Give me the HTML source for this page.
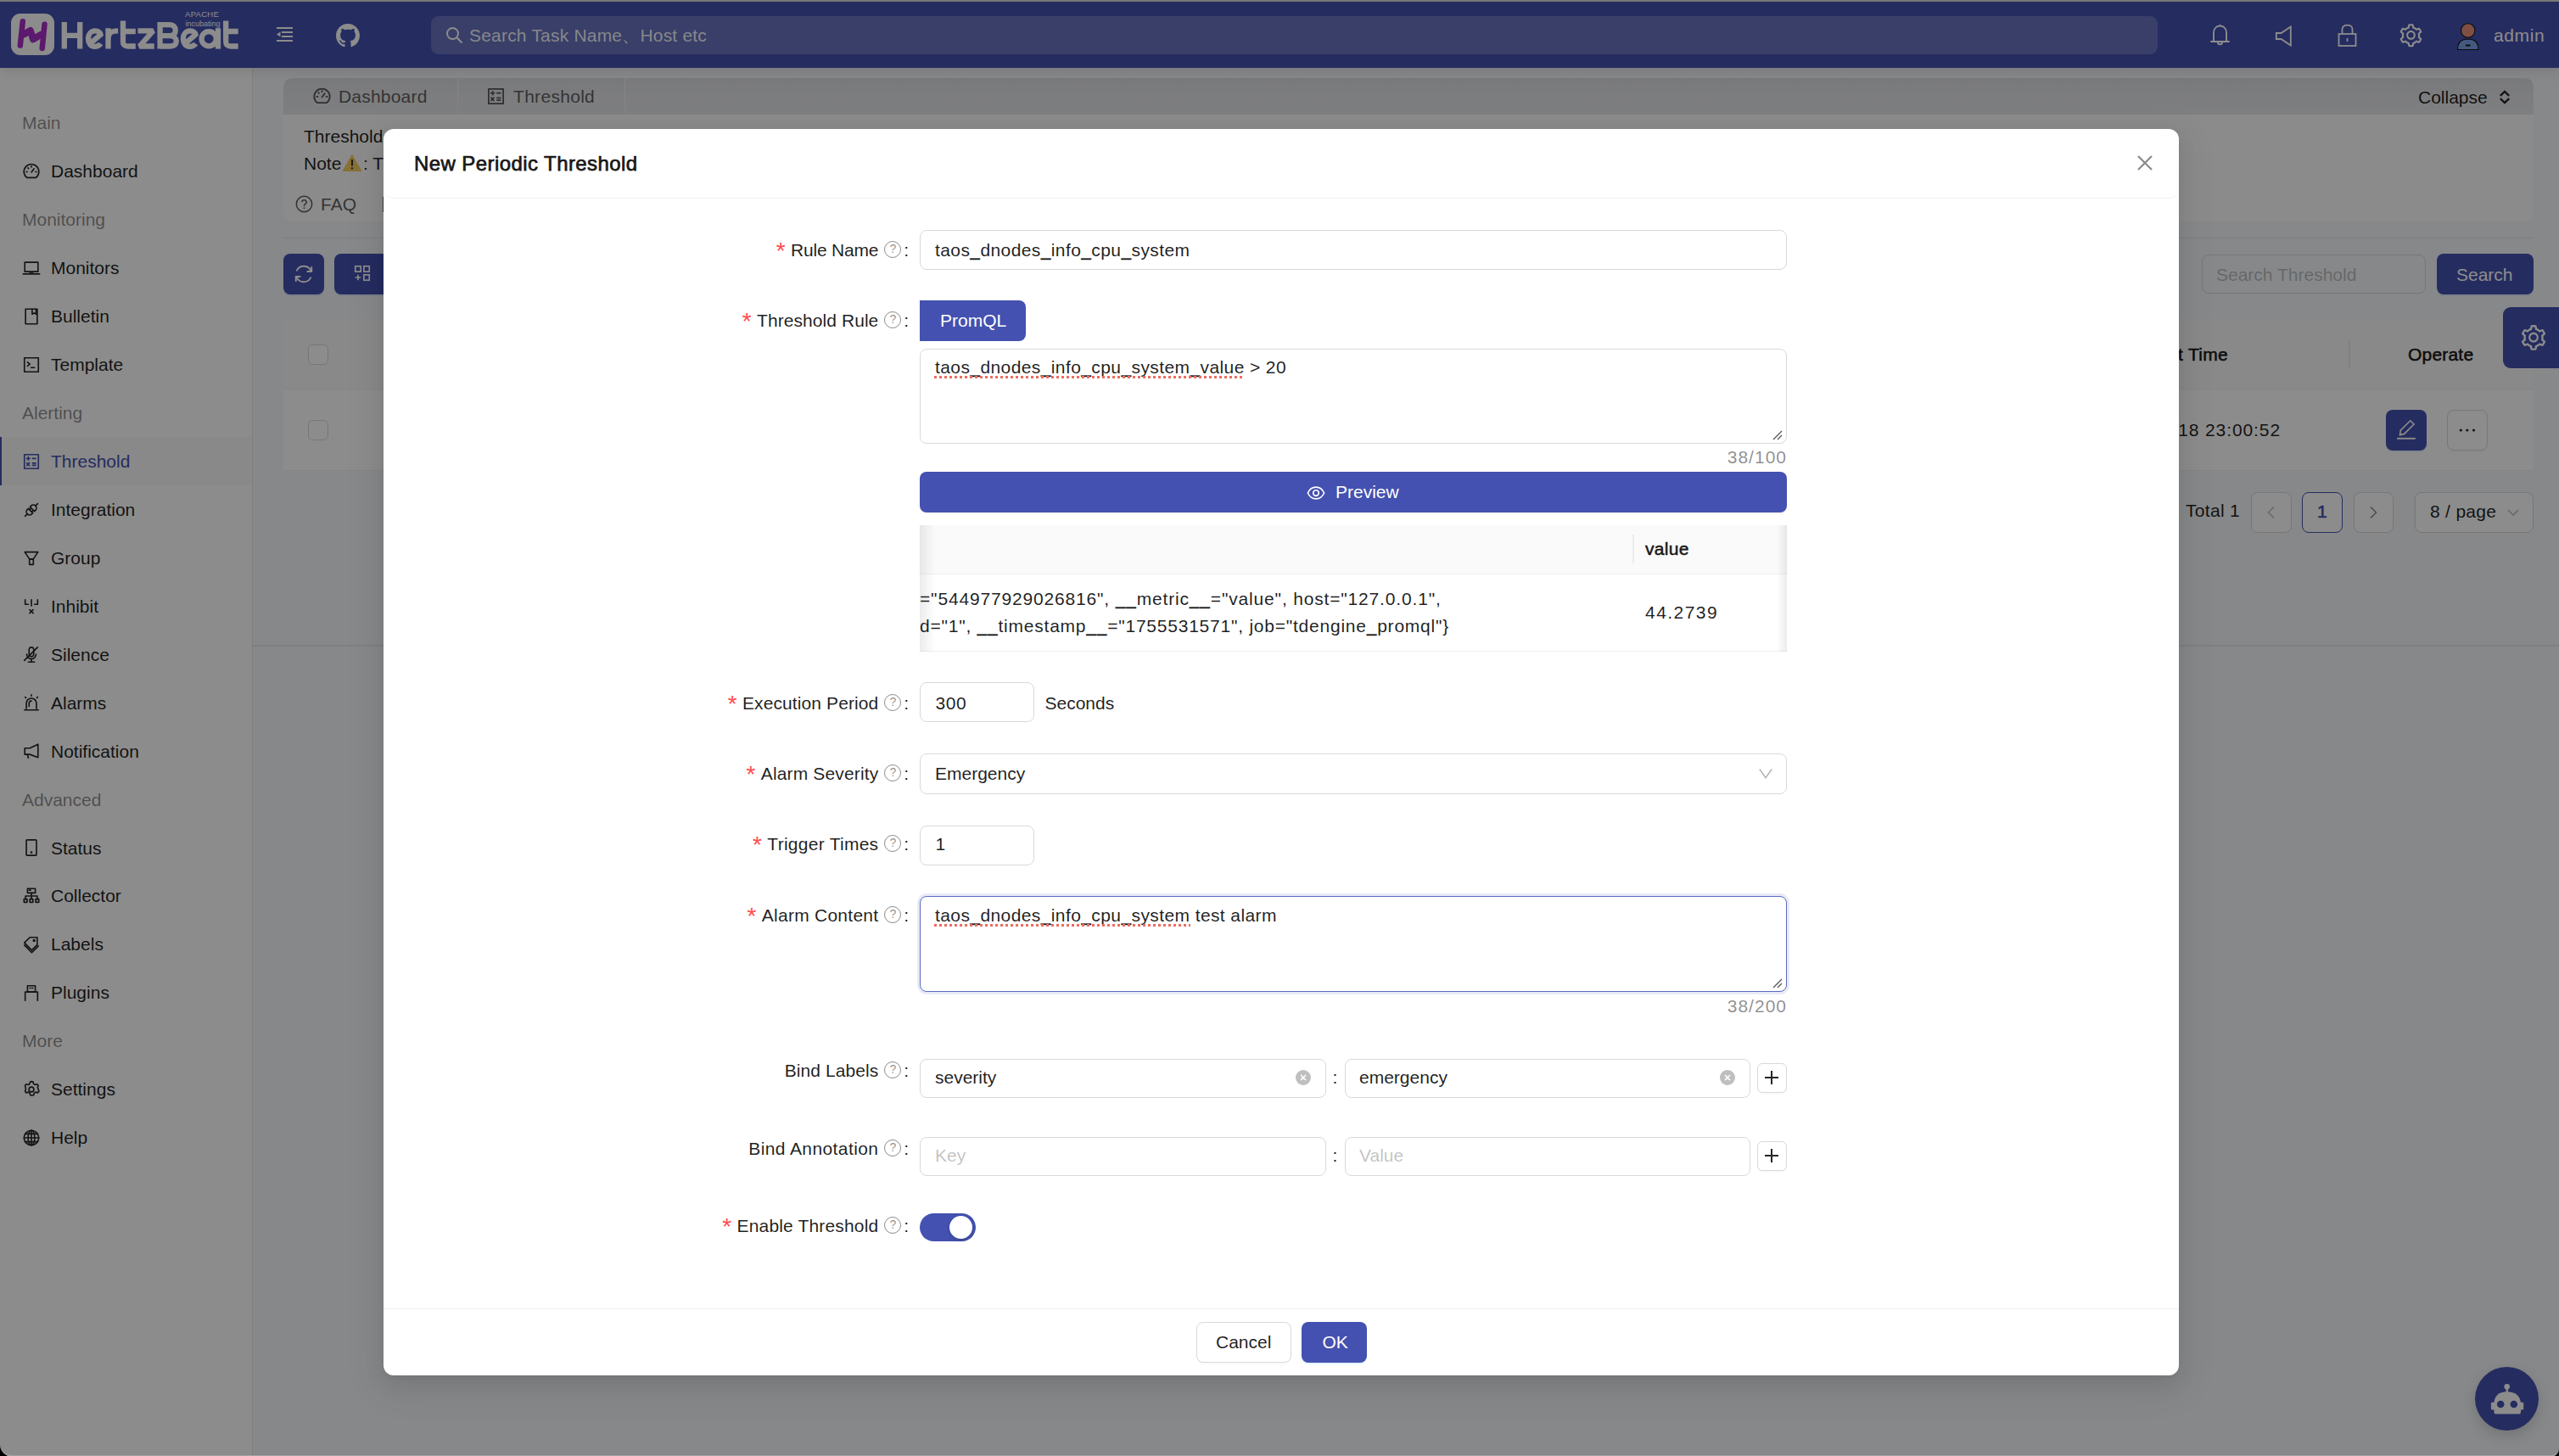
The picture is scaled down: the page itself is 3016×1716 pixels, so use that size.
<!DOCTYPE html><html><head><meta charset="utf-8"><style>
*{box-sizing:border-box;margin:0;padding:0}
html,body{width:3016px;height:1716px;overflow:hidden;background:#000}
body{font-family:"Liberation Sans",sans-serif;font-size:21px;color:rgba(0,0,0,.88);position:relative}
.abs{position:absolute}
.t{position:absolute;white-space:nowrap;line-height:24px;height:24px}
#app{position:absolute;left:0;top:0;width:3016px;height:1716px;background:#f5f7fa;overflow:hidden;isolation:isolate;z-index:0}
#hdr{position:absolute;left:0;top:2px;width:3016px;height:78px;background:#4451b0;z-index:2;box-shadow:0 2px 14px rgba(0,0,0,.13)}
#side{position:absolute;left:0;top:80px;width:298px;height:1636px;background:#fff;border-right:1px solid #e8e8e8}
svg{display:block;position:absolute}
#mask{position:absolute;left:0;top:0;width:3016px;height:1716px;background:rgba(0,0,0,.45)}
#modal{position:absolute;left:452px;top:152px;width:2116px;height:1469px;background:#fff;border-radius:12px;box-shadow:0 4px 9px -6px rgba(0,0,0,.12),0 9px 24px 0 rgba(0,0,0,.08),0 13px 42px 12px rgba(0,0,0,.05)}
.inp{position:absolute;border:1.5px solid #d9d9d9;border-radius:8px;background:#fff}
.lbl{position:absolute;right:1944.8px;white-space:nowrap;line-height:24px;height:24px;color:rgba(0,0,0,.88)}
.req{color:#ff4d4f;margin-right:3.5px;font-size:28px;position:relative;top:4px;font-family:'Liberation Mono',monospace}
.help{display:inline-block;width:20px;height:20px;border:1.5px solid rgba(0,0,0,.45);border-radius:50%;vertical-align:top;margin-left:7px;position:relative;top:1px;font-size:14px;line-height:17px;text-align:center;color:rgba(0,0,0,.45)}
.colon{margin-left:3px}
.u{text-shadow:0 -1px 0 rgba(0,0,0,.6)}
.btnp{position:absolute;background:#4451b0;border-radius:8px;color:#fff;box-shadow:0 2px 0 rgba(5,145,255,.1)}
.btnd{position:absolute;background:#fff;border:1.5px solid #d9d9d9;border-radius:8px;box-shadow:0 2px 0 rgba(0,0,0,.02)}
</style></head><body>
<div id="app">
<div id="hdr">
    <!-- logo -->
    <div class="abs" style="left:13px;top:14px;width:51px;height:49px;border-radius:11px;background:#fff"></div>
    <svg class="abs" style="left:0;top:-2px" width="70" height="80" viewBox="0 0 70 80">
      <g stroke="#a82fc6" stroke-width="6.5" stroke-linecap="round" stroke-linejoin="round" fill="none">
        <path d="M26.8 25.3 L23.8 53.6"/><path d="M28.5 40.3 L35.8 36 L39 46.3 L48 41" stroke-width="8"/><path d="M52.5 28.8 L49.7 56.9"/>
      </g>
    </svg>
    <svg class="abs" style="left:0;top:-2px" width="300" height="80" viewBox="0 0 300 80"><g stroke="#fff" stroke-width="6.3" fill="none" stroke-linecap="butt" stroke-linejoin="miter">
<path d="M75.8 26.1 V57.6 M94.2 26.1 V57.6 M75.8 41.8 H94.2"/>
<path id="lge" d="M118.8 51.5 C116.8 54.2 114.2 54.9 111.6 54.9 C106.6 54.9 104 50.6 104 45.8 C104 40.2 107.5 36.4 112 36.4 C116.4 36.4 118.4 39.2 118.6 40.8 L106 51.5"/>
<path d="M127.5 33.3 V57.6 M127.5 46 C127.5 38.5 131.5 36.3 139.2 36.3"/>
<path d="M145 24.6 V49 C145 53.8 147.5 54.5 151 54.5 H159.8 M141.8 37 H159.8"/>
<path d="M162.5 36.4 H180.5 L164.5 54.5 H181.8" stroke-linejoin="bevel"/>
<path d="M188.6 26.1 V57.6 M188.6 29.2 H199.5 C204.5 29.2 206.8 32 206.8 35.8 C206.8 39.6 204.5 42.2 199.8 42.2 H188.6 M199.8 42.2 C205.5 42.2 207.8 45.5 207.8 48.6 C207.8 52.2 205.5 54.5 200.5 54.5 H188.6"/>
<use href="#lge" x="111.9"/>
<circle cx="246.2" cy="45.7" r="8.6"/><path d="M257 33.3 V57.6"/>
<path d="M266.2 24.6 V49 C266.2 53.8 268.7 54.5 272.2 54.5 H280.7 M263 37 H280.7"/>
</g></svg>
    <div class="abs" style="left:218px;top:8.5px;font-size:9.5px;color:#fff;line-height:12px;letter-spacing:.3px">APACHE</div>
    <div class="abs" style="left:218.5px;top:20px;font-size:9px;color:#fff;line-height:12px;letter-spacing:0">incubating</div>
    <!-- menu fold -->
    <svg class="abs" style="left:326px;top:30px" width="19" height="17" viewBox="0 0 19 17"><g fill="#fff"><rect x="0" y="0" width="19" height="2"/><rect x="6" y="5" width="13" height="2"/><rect x="6" y="10" width="13" height="2"/><rect x="0" y="15" width="19" height="2"/><path d="M0 8.5 L4.5 5.5 L4.5 11.5Z"/></g></svg>
    <!-- github -->
    <svg class="abs" style="left:396px;top:26px" width="28" height="28" viewBox="0 0 16 16"><path fill="#fff" d="M8 0C3.58 0 0 3.58 0 8c0 3.54 2.29 6.53 5.47 7.59.4.07.55-.17.55-.38 0-.19-.01-.82-.01-1.49-2.01.37-2.53-.49-2.69-.94-.09-.23-.48-.94-.82-1.13-.28-.15-.68-.52-.01-.53.63-.01 1.08.58 1.23.82.72 1.21 1.87.87 2.33.66.07-.52.28-.87.51-1.07-1.78-.2-3.64-.89-3.64-3.95 0-.87.31-1.59.82-2.15-.08-.2-.36-1.02.08-2.12 0 0 .67-.21 2.2.82.64-.18 1.32-.27 2-.27.68 0 1.36.09 2 .27 1.53-1.04 2.2-.82 2.2-.82.44 1.1.16 1.92.08 2.12.51.56.82 1.27.82 2.15 0 3.07-1.87 3.75-3.65 3.95.29.25.54.73.54 1.48 0 1.07-.01 1.93-.01 2.2 0 .21.15.46.55.38A8.013 8.013 0 0016 8c0-4.42-3.58-8-8-8z"/></svg>
    <!-- search -->
    <div class="abs" style="left:508px;top:17px;width:2035px;height:45px;border-radius:9px;background:rgba(255,255,255,.2)"></div>
    <svg class="abs" style="left:525px;top:29px" width="21" height="21" viewBox="0 0 21 21"><g stroke="#fff" stroke-width="2" fill="none"><circle cx="8.5" cy="8.5" r="6.5"/><path d="M13.3 13.3 L19.5 19.5"/></g></svg>
    <div class="abs" style="left:553px;top:17px;line-height:45px;font-size:21px;color:rgba(255,255,255,.95);white-space:nowrap;letter-spacing:.2px">Search Task Name、Host etc</div>
    <!-- right icons -->
    <svg class="abs" style="left:2604px;top:26px" width="25" height="28" viewBox="0 0 25 28"><g stroke="#fff" stroke-width="1.9" fill="none" stroke-linejoin="round"><path d="M12.5 2.5 C7.5 2.5 5 6.5 5 10.5 L5 21 L2 21 L23 21 L20 21 L20 10.5 C20 6.5 17.5 2.5 12.5 2.5Z"/><path d="M12.5 1 L12.5 3"/><path d="M10 22 C10 25 15 25 15 22"/></g></svg>
    <svg class="abs" style="left:2681px;top:27px" width="21" height="27" viewBox="0 0 21 27"><path d="M18.8 2.5 L18.8 24.5 L7.5 17 L1.8 17 L1.8 10 L7.5 10 Z" stroke="#fff" stroke-width="1.8" fill="none" stroke-linejoin="miter"/></svg>
    <svg class="abs" style="left:2754px;top:24px" width="25" height="30" viewBox="0 0 25 30"><g stroke="#fff" stroke-width="1.8" fill="none"><rect x="2.5" y="14" width="20" height="14"/><path d="M6.5 14 V8.5 C6.5 2 18.5 2 18.5 8.5 V14"/><path d="M12.5 19 V23"/></g></svg>
    <svg class="abs" style="left:2826px;top:23.5px" width="31" height="31.5" viewBox="0 0 1024 1024"><path fill="#fff" d="M924.8 625.7l-65.5-56c3.1-19 4.7-38.4 4.7-57.8s-1.6-38.8-4.7-57.8l65.5-56a32.03 32.03 0 009.3-35.2l-.9-2.6a443.6 443.6 0 00-79.7-137.9l-1.8-2.1a32.12 32.12 0 00-35.1-9.5l-81.3 28.9c-30-24.6-63.5-44-99.7-57.6l-15.7-85a32.05 32.05 0 00-25.8-25.7l-2.7-.5c-52.1-9.4-106.9-9.4-159 0l-2.7.5a32.05 32.05 0 00-25.8 25.7l-15.8 85.4a351.86 351.86 0 00-99 57.4l-81.9-29.1a32 32 0 00-35.1 9.5l-1.8 2.1a446.02 446.02 0 00-79.7 137.9l-.9 2.6c-4.5 12.5-.8 26.5 9.3 35.2l66.3 56.6c-3.1 18.8-4.6 38-4.6 57.1 0 19.2 1.5 38.4 4.6 57.1L99 625.5a32.03 32.03 0 00-9.3 35.2l.9 2.6c18.1 50.4 44.9 96.9 79.7 137.9l1.8 2.1a32.12 32.12 0 0035.1 9.5l81.9-29.1c29.8 24.5 63.1 43.9 99 57.4l15.8 85.4a32.05 32.05 0 0025.8 25.7l2.7.5a449.4 449.4 0 00159 0l2.7-.5a32.05 32.05 0 0025.8-25.7l15.7-85a350 350 0 0099.7-57.6l81.3 28.9a32 32 0 0035.1-9.5l1.8-2.1c34.8-41.1 61.6-87.5 79.7-137.9l.9-2.6c4.5-12.3.8-26.3-9.3-35zM788.3 465.9c2.5 15.1 3.8 30.6 3.8 46.1s-1.3 31-3.8 46.1l-6.6 40.1 74.7 63.9a370.03 370.03 0 01-42.6 73.6L721 702.8l-31.4 25.8c-23.9 19.6-50.5 35-79.3 45.8l-38.1 14.3-17.9 97a377.5 377.5 0 01-85 0l-17.9-97.2-37.8-14.5c-28.5-10.8-55-26.2-78.7-45.7l-31.4-25.9-93.4 33.2c-17-22.9-31.2-47.6-42.6-73.6l75.5-64.5-6.5-40c-2.4-14.9-3.7-30.3-3.7-45.5 0-15.3 1.2-30.6 3.7-45.5l6.5-40-75.5-64.5c11.3-26.1 25.6-50.7 42.6-73.6l93.4 33.2 31.4-25.9c23.7-19.5 50.2-34.9 78.7-45.7l37.9-14.3 17.9-97.2c28.1-3.2 56.8-3.2 85 0l17.9 97 38.1 14.3c28.7 10.8 55.4 26.2 79.3 45.8l31.4 25.8 92.8-32.9c17 22.9 31.2 47.6 42.6 73.6L781.8 426l6.5 39.9zM512 326c-97.2 0-176 78.8-176 176s78.8 176 176 176 176-78.8 176-176-78.8-176-176-176zm79.2 255.2A111.6 111.6 0 01512 614c-29.9 0-58-11.7-79.2-32.8A111.6 111.6 0 01400 502c0-29.9 11.7-58 32.8-79.2C454 401.6 482.1 390 512 390c29.9 0 58 11.6 79.2 32.8A111.6 111.6 0 01624 502c0 29.9-11.7 58-32.8 79.2z"/></svg>
    <!-- avatar -->
    <svg class="abs" style="left:2894px;top:23px" width="30" height="36" viewBox="0 0 30 36"><g stroke="#111" stroke-width="1.1"><circle cx="14.7" cy="11" r="8.2" fill="#e8907a"/><path d="M2.5 33.5 C2.5 26 6.5 22 11.5 21.3 L18 21.3 C23 22 27 26 27 33.5 Z" fill="#7aa2e8"/></g><rect x="12" y="27.5" width="5.5" height="2" fill="#111"/></svg>
    <div class="abs" style="left:2939px;top:17px;line-height:45px;font-size:21px;color:#fff;letter-spacing:.6px">admin</div>
  </div>

  
<div id="side">
<div class="t" style="left:26px;top:53.2px;color:rgba(0,0,0,.45)">Main</div>
<svg style="left:25.5px;top:111.0px" width="22" height="22" viewBox="0 0 24 24"><g stroke="#262626" stroke-width="1.8" fill="none" stroke-linecap="round" stroke-linejoin="round"><path d="M6.2 20 A9.6 9.6 0 1 1 17.8 20 Z"/><path d="M12 13 L15.5 8.5"/><path d="M5.5 12.5h1.2M17.3 12.5h1.2M7.5 7.5l.8.8M12 5.3v1.2"/></g></svg>
<div class="t" style="left:60px;top:110.2px;color:rgba(0,0,0,.88)">Dashboard</div>
<div class="t" style="left:26px;top:167.1px;color:rgba(0,0,0,.45)">Monitoring</div>
<svg style="left:25.5px;top:224.9px" width="22" height="22" viewBox="0 0 24 24"><g stroke="#262626" stroke-width="1.8" fill="none" stroke-linecap="round" stroke-linejoin="round"><rect x="3.5" y="4.5" width="17" height="12"/><path d="M1.5 19.5 H22.5"/><path d="M10 17.5 h4"/></g></svg>
<div class="t" style="left:60px;top:224.1px;color:rgba(0,0,0,.88)">Monitors</div>
<svg style="left:25.5px;top:281.8px" width="22" height="22" viewBox="0 0 24 24"><g stroke="#262626" stroke-width="1.8" fill="none" stroke-linecap="round" stroke-linejoin="round"><rect x="4.5" y="2.5" width="15" height="19"/><path d="M13 2.5 V9 L15.5 7.5 L18 9 V2.5"/></g></svg>
<div class="t" style="left:60px;top:281.0px;color:rgba(0,0,0,.88)">Bulletin</div>
<svg style="left:25.5px;top:338.8px" width="22" height="22" viewBox="0 0 24 24"><g stroke="#262626" stroke-width="1.8" fill="none" stroke-linecap="round" stroke-linejoin="round"><rect x="3" y="3" width="18" height="18"/><path d="M7 8.5 L10 11 L7 13.5"/><path d="M11.5 15.5 H16"/></g></svg>
<div class="t" style="left:60px;top:338.0px;color:rgba(0,0,0,.88)">Template</div>
<div class="t" style="left:26px;top:394.9px;color:rgba(0,0,0,.45)">Alerting</div>
<div class="abs" style="left:0;top:435.2px;width:297px;height:57px;background:rgba(0,0,0,.022)"></div>
<svg style="left:25.5px;top:452.7px" width="22" height="22" viewBox="0 0 24 24"><g stroke="#4451b0" stroke-width="1.8" fill="none" stroke-linecap="round" stroke-linejoin="round"><rect x="3" y="3" width="18" height="18"/><path d="M6 8h4M8 6v4M13.5 8h4M6.2 13.8l3.2 3.2M9.4 13.8l-3.2 3.2M13.5 14h4M13.5 16.8h4"/></g></svg>
<div class="t" style="left:60px;top:451.9px;color:#4451b0">Threshold</div>
<div class="abs" style="left:0;top:435.2px;width:2px;height:57px;background:#4451b0"></div>
<svg style="left:25.5px;top:509.6px" width="22" height="22" viewBox="0 0 24 24"><g stroke="#262626" stroke-width="1.8" fill="none" stroke-linecap="round" stroke-linejoin="round"><g transform="rotate(-45 12 12)"><path d="M0.5 12 H5"/><path d="M10.5 8 H8.5 A4 4 0 0 0 8.5 16 H10.5 Z"/><path d="M10.5 10 H13 M10.5 14 H13"/><path d="M13.5 8 H15.5 A4 4 0 0 1 15.5 16 H13.5 Z"/><path d="M19.5 12 H23.5"/></g></g></svg>
<div class="t" style="left:60px;top:508.8px;color:rgba(0,0,0,.88)">Integration</div>
<svg style="left:25.5px;top:566.6px" width="22" height="22" viewBox="0 0 24 24"><g stroke="#262626" stroke-width="1.8" fill="none" stroke-linecap="round" stroke-linejoin="round"><path d="M3.5 4 H20.5 L14.5 13 H9.5 Z"/><rect x="9.5" y="13" width="5" height="7"/></g></svg>
<div class="t" style="left:60px;top:565.8px;color:rgba(0,0,0,.88)">Group</div>
<svg style="left:25.5px;top:623.5px" width="22" height="22" viewBox="0 0 24 24"><g stroke="#262626" stroke-width="1.8" fill="none" stroke-linecap="round" stroke-linejoin="round"><path d="M4 3 V9 H8"/><path d="M20 3 V9 H16"/><path d="M12 3 V11"/><path d="M9.8 16 l4.4 4.4 M14.2 16 l-4.4 4.4"/></g></svg>
<div class="t" style="left:60px;top:622.7px;color:rgba(0,0,0,.88)">Inhibit</div>
<svg style="left:25.5px;top:680.5px" width="22" height="22" viewBox="0 0 24 24"><g stroke="#262626" stroke-width="1.8" fill="none" stroke-linecap="round" stroke-linejoin="round"><path d="M9 5 a3 3 0 0 1 6 0 v6 a3 3 0 0 1 -6 0z"/><path d="M6 11 a6 6 0 0 0 12 0"/><path d="M12 17 v4 M8 21 h8"/><path d="M3 19 L20 2"/></g></svg>
<div class="t" style="left:60px;top:679.7px;color:rgba(0,0,0,.88)">Silence</div>
<svg style="left:25.5px;top:737.4px" width="22" height="22" viewBox="0 0 24 24"><g stroke="#262626" stroke-width="1.8" fill="none" stroke-linecap="round" stroke-linejoin="round"><path d="M5.5 20 V13 a6.5 6.5 0 0 1 13 0 V20"/><path d="M3 21.5 H21"/><path d="M9 17 v-4 a3 3 0 0 1 3 -3"/><path d="M12 2 v1.5M4 5l1 1M20 5l-1 1"/></g></svg>
<div class="t" style="left:60px;top:736.6px;color:rgba(0,0,0,.88)">Alarms</div>
<svg style="left:25.5px;top:794.4px" width="22" height="22" viewBox="0 0 24 24"><g stroke="#262626" stroke-width="1.8" fill="none" stroke-linecap="round" stroke-linejoin="round"><path d="M20.5 3.5 V20.5 L10 16.5 H3.5 V8.5 H10 Z"/><path d="M7 16.5 L8 21"/></g></svg>
<div class="t" style="left:60px;top:793.6px;color:rgba(0,0,0,.88)">Notification</div>
<div class="t" style="left:26px;top:850.5px;color:rgba(0,0,0,.45)">Advanced</div>
<svg style="left:25.5px;top:908.2px" width="22" height="22" viewBox="0 0 24 24"><g stroke="#262626" stroke-width="1.8" fill="none" stroke-linecap="round" stroke-linejoin="round"><rect x="5.5" y="2" width="13" height="20" rx="1"/><circle cx="12" cy="18" r=".6" fill="#262626"/></g></svg>
<div class="t" style="left:60px;top:907.5px;color:rgba(0,0,0,.88)">Status</div>
<svg style="left:25.5px;top:965.2px" width="22" height="22" viewBox="0 0 24 24"><g stroke="#262626" stroke-width="1.8" fill="none" stroke-linecap="round" stroke-linejoin="round"><rect x="7" y="2.5" width="10" height="5.5"/><path d="M12 8 V12 M4.5 16 V12 H19.5 V16 M12 12 V16"/><rect x="2.5" y="16" width="4" height="4"/><rect x="10" y="16" width="4" height="4"/><rect x="17.5" y="16" width="4" height="4"/><path d="M9 4.5 h2"/></g></svg>
<div class="t" style="left:60px;top:964.4px;color:rgba(0,0,0,.88)">Collector</div>
<svg style="left:25.5px;top:1022.2px" width="22" height="22" viewBox="0 0 24 24"><g stroke="#262626" stroke-width="1.8" fill="none" stroke-linecap="round" stroke-linejoin="round"><path d="M3 10 L10 3 H19.5 V12.5 L12.5 19.5 Z" transform="rotate(0)"/><circle cx="15.5" cy="7" r="1"/><path d="M3 13 L12.5 22.5 L21 14"/></g></svg>
<div class="t" style="left:60px;top:1021.4px;color:rgba(0,0,0,.88)">Labels</div>
<svg style="left:25.5px;top:1079.1px" width="22" height="22" viewBox="0 0 24 24"><g stroke="#262626" stroke-width="1.8" fill="none" stroke-linecap="round" stroke-linejoin="round"><path d="M4 22 V11 H20 V22"/><rect x="7" y="3" width="10" height="8"/><path d="M10 6 h1 M13 6 h1"/></g></svg>
<div class="t" style="left:60px;top:1078.3px;color:rgba(0,0,0,.88)">Plugins</div>
<div class="t" style="left:26px;top:1135.3px;color:rgba(0,0,0,.45)">More</div>
<svg style="left:25.5px;top:1193.0px" width="22" height="22" viewBox="0 0 24 24"><g stroke="#262626" stroke-width="1.8" fill="none" stroke-linecap="round" stroke-linejoin="round"><circle cx="12" cy="12" r="3.2"/><path d="M12 1.8 l2.2 .4 .6 2.6 2 1.2 2.6 -.8 1.5 1.8 -.9 2.5 .9 2.3 .8 2.6 -1.5 1.8 -2.6 -.8 -2 1.2 -.6 2.6 -2.2 .4 -2.2 -.4 -.6 -2.6 -2 -1.2 -2.6 .8 -1.5 -1.8 .8 -2.6 -.1 -2.3 -.8 -2.5 1.5 -1.8 2.6 .8 2 -1.2 .6 -2.6 Z"/></g></svg>
<div class="t" style="left:60px;top:1192.2px;color:rgba(0,0,0,.88)">Settings</div>
<svg style="left:25.5px;top:1250.0px" width="22" height="22" viewBox="0 0 24 24"><g stroke="#262626" stroke-width="1.8" fill="none" stroke-linecap="round" stroke-linejoin="round"><circle cx="12" cy="12" r="9.5"/><ellipse cx="12" cy="12" rx="4.3" ry="9.5"/><path d="M2.5 12 H21.5 M12 2.5 V21.5 M4 7 H20 M4 17 H20"/></g></svg>
<div class="t" style="left:60px;top:1249.2px;color:rgba(0,0,0,.88)">Help</div>
</div>
<div class="abs" style="left:334px;top:92px;width:2652px;height:169px;border-radius:10px;background:#fdfdfd;overflow:hidden">
<div class="abs" style="left:0;top:0;width:2652px;height:43px;background:linear-gradient(#dddee1,#e7e8eb)"></div>
<div class="abs" style="left:205px;top:0;width:1px;height:43px;background:#f0f0f0"></div>
<div class="abs" style="left:402px;top:0;width:1px;height:43px;background:#f0f0f0"></div>
</div>
<svg style="left:368px;top:102px" width="23" height="23" viewBox="0 0 24 24"><g stroke="#555" stroke-width="1.8" fill="none" stroke-linecap="round" stroke-linejoin="round"><path d="M6.2 20 A9.6 9.6 0 1 1 17.8 20 Z"/><path d="M12 13 L15.5 8.5"/><path d="M5.5 12.5h1.2M17.3 12.5h1.2M7.5 7.5l.8.8M12 5.3v1.2"/></g></svg>
<div class="t" style="left:399px;top:101.5px;font-size:21px;color:rgba(0,0,0,.62);letter-spacing:.2px">Dashboard</div>
<svg style="left:573px;top:102px" width="23" height="23" viewBox="0 0 24 24"><g stroke="#555" stroke-width="1.8" fill="none" stroke-linecap="round" stroke-linejoin="round"><rect x="3" y="3" width="18" height="18"/><path d="M6 8h4M8 6v4M13.5 8h4M6.2 13.8l3.2 3.2M9.4 13.8l-3.2 3.2M13.5 14h4M13.5 16.8h4"/></g></svg>
<div class="t" style="left:605px;top:101.5px;font-size:21px;color:rgba(0,0,0,.62);letter-spacing:.3px">Threshold</div>
<div class="t" style="left:2850px;top:102.7px;font-size:21px;color:rgba(0,0,0,.88)">Collapse</div>
<svg style="left:2945px;top:106px" width="14" height="17" viewBox="0 0 14 17"><g stroke="#262626" stroke-width="2.3" fill="none"><path d="M1.8 6.8 L7 1.8 L12.2 6.8"/><path d="M1.8 10.2 L7 15.2 L12.2 10.2"/></g></svg>
<div class="t" style="left:358px;top:148.7px;font-size:21px;">Threshold</div>
<div class="t" style="left:358px;top:181.4px;font-size:21px;">Note</div>
<svg style="left:403.5px;top:181.5px" width="22" height="20" viewBox="0 0 22 20"><path d="M11 .5 L22 19.5 H0 Z" fill="#f4cd62" stroke="#f4cd62" stroke-width="1" stroke-linejoin="round"/><path d="M11 6 V13.5" stroke="#222" stroke-width="1.8"/><circle cx="11" cy="16.3" r="1.1" fill="#222"/></svg>
<div class="t" style="left:428px;top:181.4px;font-size:21px;">: T</div>
<svg style="left:348px;top:229.5px" width="21" height="21" viewBox="0 0 24 24"><g stroke="#595959" stroke-width="1.7" fill="none"><circle cx="12" cy="12" r="10.5"/><path d="M9 9.5 a3 3 0 1 1 4.2 2.7 c-.9 .4 -1.2 1 -1.2 1.8 v.8"/></g><circle cx="12" cy="17.5" r="1.1" fill="#595959"/></svg>
<div class="t" style="left:378px;top:228.7px;font-size:21px;color:rgba(0,0,0,.65)">FAQ</div>
<div class="abs" style="left:451px;top:232px;width:1.5px;height:18px;background:#666"></div>
<div class="abs" style="left:334px;top:280px;width:2652px;height:1px;background:#e3e4e7"></div>
<div class="btnp" style="left:334px;top:299px;width:48px;height:47.5px"></div>
<svg style="left:345px;top:310px" width="26" height="26" viewBox="0 0 24 24"><g stroke="#fff" stroke-width="1.8" fill="none" stroke-linecap="round"><path d="M20 9 A8.5 8.5 0 0 0 4.5 8"/><path d="M4 15 A8.5 8.5 0 0 0 19.5 16"/><path d="M20.5 4.5 V9.2 H16"/><path d="M3.5 19.5 V14.8 H8"/></g></svg>
<div class="btnp" style="left:394px;top:299px;width:80px;height:47.5px"></div>
<svg style="left:416px;top:311px" width="22" height="22" viewBox="0 0 24 24"><g stroke="#fff" stroke-width="1.8" fill="none"><rect x="3" y="3" width="7" height="7"/><rect x="14" y="3" width="7" height="7"/><rect x="14" y="14" width="7" height="7"/><path d="M6.5 14 v7 M3 17.5 h7"/></g></svg>
<div class="inp" style="left:2595px;top:300px;width:264px;height:46px;background:transparent"></div>
<div class="t" style="left:2612px;top:311.7px;font-size:21px;color:rgba(0,0,0,.25)">Search Threshold</div>
<div class="btnp" style="left:2872px;top:299px;width:114px;height:47.5px"></div>
<div class="t" style="left:2895px;top:311.7px;font-size:21px;color:#fff">Search</div>
<div class="abs" style="left:334px;top:375px;width:2652px;height:84px;background:#fafafa;border-bottom:1px solid #f0f0f0"></div>
<div class="abs" style="left:334px;top:459px;width:2652px;height:96px;background:#fff;border-bottom:1px solid #f0f0f0"></div>
<div class="abs" style="left:363px;top:406px;width:24px;height:24px;border:1.5px solid #d9d9d9;border-radius:5px;background:#fff"></div>
<div class="abs" style="left:363px;top:495px;width:24px;height:24px;border:1.5px solid #d9d9d9;border-radius:5px;background:#fff"></div>
<div class="abs" style="left:2768px;top:401px;width:1.5px;height:32px;background:#e8e8e8"></div>
<div class="t" style="right:390px;top:406px;color:rgba(0,0,0,.88);-webkit-text-stroke:.6px rgba(0,0,0,.88);letter-spacing:.3px">Last Time</div>
<div class="t" style="left:2838px;top:405.7px;font-size:21px;-webkit-text-stroke:.6px rgba(0,0,0,.88);letter-spacing:.2px">Operate</div>
<div class="t" style="right:328px;top:495px;letter-spacing:.9px">2025-08-18 23:00:52</div>
<div class="btnp" style="left:2812px;top:483px;width:47.5px;height:47.5px"></div>
<svg style="left:2820px;top:490px" width="32" height="32" viewBox="0 0 32 32"><g stroke="#fff" stroke-width="1.6" fill="none" stroke-linejoin="miter"><path d="M8.5 22.6 L9.3 17.2 L20.8 5.8 L25 10 L13.6 21.4 Z"/><path d="M5 26.8 H26.8" stroke-width="1.9"/></g></svg>
<div class="btnd" style="left:2884px;top:483px;width:47.5px;height:47.5px"></div>
<svg style="left:2890px;top:497px" width="32" height="20" viewBox="0 0 32 20"><g fill="#262626"><circle cx="10.3" cy="10" r="1.6"/><circle cx="17.8" cy="10" r="1.6"/><circle cx="25.5" cy="10" r="1.6"/></g></svg>
<div class="t" style="left:2576px;top:590.3px;font-size:21px;letter-spacing:.3px">Total 1</div>
<div class="btnd" style="left:2653px;top:580px;width:47.5px;height:47.5px;box-shadow:none"></div>
<svg style="left:2667px;top:594px" width="20" height="20" viewBox="0 0 20 20"><path d="M13 3.5 L6.5 10 L13 16.5" stroke="#bfbfbf" stroke-width="1.5" fill="none"/></svg>
<div class="abs" style="left:2713px;top:580px;width:47.5px;height:47.5px;border:1.5px solid #4451b0;border-radius:8px;background:#fff"></div>
<div class="t" style="left:2731px;top:591.3px;font-size:21px;color:#4451b0;-webkit-text-stroke:.6px #4451b0">1</div>
<div class="btnd" style="left:2773.5px;top:580px;width:47.5px;height:47.5px;box-shadow:none"></div>
<svg style="left:2787px;top:594px" width="20" height="20" viewBox="0 0 20 20"><path d="M7 3.5 L13.5 10 L7 16.5" stroke="#8c8c8c" stroke-width="1.5" fill="none"/></svg>
<div class="btnd" style="left:2846px;top:580px;width:140px;height:47.5px;box-shadow:none"></div>
<div class="t" style="left:2864px;top:591.3px;font-size:21px;letter-spacing:.3px">8 / page</div>
<svg style="left:2953px;top:597px" width="18" height="14" viewBox="0 0 18 14"><path d="M3 4 L9 10 L15 4" stroke="#bfbfbf" stroke-width="1.6" fill="none"/></svg>
<div class="abs" style="left:298px;top:760px;width:2718px;height:1.5px;background:#e6e7ea"></div>
<div class="abs" style="left:2950px;top:362px;width:80px;height:71.5px;background:#4451b0;border-radius:9px 0 0 9px"></div>
<svg style="left:2968.5px;top:380.5px" width="34" height="34" viewBox="0 0 1024 1024"><path fill="#fff" d="M924.8 625.7l-65.5-56c3.1-19 4.7-38.4 4.7-57.8s-1.6-38.8-4.7-57.8l65.5-56a32.03 32.03 0 009.3-35.2l-.9-2.6a443.6 443.6 0 00-79.7-137.9l-1.8-2.1a32.12 32.12 0 00-35.1-9.5l-81.3 28.9c-30-24.6-63.5-44-99.7-57.6l-15.7-85a32.05 32.05 0 00-25.8-25.7l-2.7-.5c-52.1-9.4-106.9-9.4-159 0l-2.7.5a32.05 32.05 0 00-25.8 25.7l-15.8 85.4a351.86 351.86 0 00-99 57.4l-81.9-29.1a32 32 0 00-35.1 9.5l-1.8 2.1a446.02 446.02 0 00-79.7 137.9l-.9 2.6c-4.5 12.5-.8 26.5 9.3 35.2l66.3 56.6c-3.1 18.8-4.6 38-4.6 57.1 0 19.2 1.5 38.4 4.6 57.1L99 625.5a32.03 32.03 0 00-9.3 35.2l.9 2.6c18.1 50.4 44.9 96.9 79.7 137.9l1.8 2.1a32.12 32.12 0 0035.1 9.5l81.9-29.1c29.8 24.5 63.1 43.9 99 57.4l15.8 85.4a32.05 32.05 0 0025.8 25.7l2.7.5a449.4 449.4 0 00159 0l2.7-.5a32.05 32.05 0 0025.8-25.7l15.7-85a350 350 0 0099.7-57.6l81.3 28.9a32 32 0 0035.1-9.5l1.8-2.1c34.8-41.1 61.6-87.5 79.7-137.9l.9-2.6c4.5-12.3.8-26.3-9.3-35zM788.3 465.9c2.5 15.1 3.8 30.6 3.8 46.1s-1.3 31-3.8 46.1l-6.6 40.1 74.7 63.9a370.03 370.03 0 01-42.6 73.6L721 702.8l-31.4 25.8c-23.9 19.6-50.5 35-79.3 45.8l-38.1 14.3-17.9 97a377.5 377.5 0 01-85 0l-17.9-97.2-37.8-14.5c-28.5-10.8-55-26.2-78.7-45.7l-31.4-25.9-93.4 33.2c-17-22.9-31.2-47.6-42.6-73.6l75.5-64.5-6.5-40c-2.4-14.9-3.7-30.3-3.7-45.5 0-15.3 1.2-30.6 3.7-45.5l6.5-40-75.5-64.5c11.3-26.1 25.6-50.7 42.6-73.6l93.4 33.2 31.4-25.9c23.7-19.5 50.2-34.9 78.7-45.7l37.9-14.3 17.9-97.2c28.1-3.2 56.8-3.2 85 0l17.9 97 38.1 14.3c28.7 10.8 55.4 26.2 79.3 45.8l31.4 25.8 92.8-32.9c17 22.9 31.2 47.6 42.6 73.6L781.8 426l6.5 39.9zM512 326c-97.2 0-176 78.8-176 176s78.8 176 176 176 176-78.8 176-176-78.8-176-176-176zm79.2 255.2A111.6 111.6 0 01512 614c-29.9 0-58-11.7-79.2-32.8A111.6 111.6 0 01400 502c0-29.9 11.7-58 32.8-79.2C454 401.6 482.1 390 512 390c29.9 0 58 11.6 79.2 32.8A111.6 111.6 0 01624 502c0 29.9-11.7 58-32.8 79.2z"/></svg>
<div class="abs" style="left:2917px;top:1610.5px;width:75px;height:75px;border-radius:50%;background:#4451b0;box-shadow:0 6px 16px rgba(0,0,0,.15)"></div>
<svg style="left:2930px;top:1625px" width="50" height="50" viewBox="0 0 50 50"><g fill="#fff"><circle cx="24.7" cy="9.2" r="3.3"/><rect x="23.5" y="11" width="2.4" height="5"/><path d="M9.4 39.6 Q9.4 41.6 11.4 41.6 L39 41.6 Q41 41.6 41 39.6 L41 30 C41 20 34.4 15.2 24.7 15.2 C15 15.2 9.4 20 9.4 30 Z"/><rect x="5.9" y="27.8" width="4.5" height="8.6" rx="1"/><rect x="40" y="27.8" width="4.2" height="8.6" rx="1"/></g><g fill="#4451b0"><circle cx="17.2" cy="30" r="4.3"/><circle cx="32.8" cy="30" r="4.3"/></g></svg>
</div>
<div id="mask"></div>
<div id="modal"></div>
<div id="mc">
<div class="t" style="left:488px;top:180.7px;font-size:24px;font-size:24px;letter-spacing:.42px;-webkit-text-stroke:.75px rgba(0,0,0,.88);color:rgba(0,0,0,.88)">New Periodic Threshold</div>
<svg style="left:2519px;top:183px" width="18" height="18" viewBox="0 0 18 18"><g stroke="rgba(0,0,0,.45)" stroke-width="2.3" fill="none"><path d="M1 1 L17 17 M17 1 L1 17"/></g></svg>
<div class="abs" style="left:452px;top:152px;width:2116px;height:82px;border-bottom:1.5px solid #f0f0f0;border-radius:12px"></div>
<div class="lbl" style="top:283.1px"><span class="req">*</span><span style="letter-spacing:-0.183px">Rule Name</span><span class="help">?</span><span class="colon">:</span></div>
<div class="inp" style="left:1084px;top:271px;width:1021.5px;height:47px"></div>
<div class="t" style="left:1102px;top:283.1px;font-size:21px;letter-spacing:.4px">taos<span class="u">_</span>dnodes<span class="u">_</span>info<span class="u">_</span>cpu<span class="u">_</span>system</div>
<div class="lbl" style="top:365.7px"><span class="req">*</span><span style="letter-spacing:0.064px">Threshold Rule</span><span class="help">?</span><span class="colon">:</span></div>
<div class="abs" style="left:1084px;top:354px;width:125px;height:48px;background:#4451b0;border-radius:0 8px 8px 0"></div>
<div class="t" style="left:1108px;top:365.7px;font-size:21px;color:#fff">PromQL</div>
<div class="inp" style="left:1084px;top:410.5px;width:1021.5px;height:112px"></div>
<div class="t" style="left:1102px;top:421.3px;font-size:21px;letter-spacing:.4px">taos<span class="u">_</span>dnodes<span class="u">_</span>info<span class="u">_</span>cpu<span class="u">_</span>system<span class="u">_</span>value &gt; 20</div>
<div class="abs" style="left:1101px;top:443px;width:364px;height:3px;background:repeating-linear-gradient(90deg,#ee6b5f 0 3px,transparent 3px 6px)"></div>
<svg style="left:2089px;top:507px" width="12" height="12" viewBox="0 0 12 12"><g stroke="#555" stroke-width="1.3"><path d="M1 11 L11 1 M6 11 L11 6"/></g></svg>
<div class="t" style="right:910px;top:526.7px;color:rgba(0,0,0,.45);letter-spacing:1px">38/100</div>
<div class="btnp" style="left:1084px;top:556px;width:1022px;height:48px;box-shadow:0 2px 0 rgba(0,0,0,.04)"></div>
<svg style="left:1540px;top:570px" width="22" height="22" viewBox="0 0 24 24"><g stroke="#fff" stroke-width="1.8" fill="none"><path d="M1.5 12 C4 6.5 8 4.5 12 4.5 C16 4.5 20 6.5 22.5 12 C20 17.5 16 19.5 12 19.5 C8 19.5 4 17.5 1.5 12Z"/><circle cx="12" cy="12" r="3.6"/></g></svg>
<div class="t" style="left:1574px;top:567.7px;font-size:21px;color:#fff">Preview</div>
<div class="abs" style="left:1084px;top:619px;width:1022px;height:149px;overflow:hidden">
<div class="abs" style="left:0;top:0;width:1022px;height:58px;background:#fafafa;border-bottom:1.5px solid #f0f0f0"></div>
<div class="abs" style="left:0;top:58px;width:1022px;height:91px;background:#fff;border-bottom:1.5px solid #f0f0f0"></div>
<div class="abs" style="left:840px;top:11px;width:1.5px;height:34px;background:#ebebeb"></div>
</div>
<div class="abs" style="left:1084px;top:619px;width:18px;height:149px;background:linear-gradient(90deg,rgba(0,0,0,.08),rgba(0,0,0,0))"></div>
<div class="abs" style="left:2094px;top:619px;width:12px;height:149px;background:linear-gradient(270deg,rgba(0,0,0,.08),rgba(0,0,0,0))"></div>
<div class="t" style="left:1939px;top:635.0px;font-size:21px;-webkit-text-stroke:.6px rgba(0,0,0,.88);letter-spacing:.3px">value</div>
<div class="t" style="left:1084px;top:693.6px;font-size:21px;letter-spacing:.83px">="544977929026816", <span class="u">_</span><span class="u">_</span>metric<span class="u">_</span><span class="u">_</span>="value", host="127.0.0.1",</div>
<div class="t" style="left:1084px;top:725.7px;font-size:21px;letter-spacing:.77px">d="1", <span class="u">_</span><span class="u">_</span>timestamp<span class="u">_</span><span class="u">_</span>="1755531571", job="tdengine<span class="u">_</span>promql"}</div>
<div class="t" style="left:1939px;top:709.5px;font-size:21px;letter-spacing:1.45px">44.2739</div>
<div class="lbl" style="top:816.7px"><span class="req">*</span><span style="letter-spacing:0.102px">Execution Period</span><span class="help">?</span><span class="colon">:</span></div>
<div class="inp" style="left:1084px;top:804px;width:135px;height:47px"></div>
<div class="t" style="left:1102.5px;top:816.7px;font-size:21px;letter-spacing:.6px">300</div>
<div class="t" style="left:1231.5px;top:816.7px;font-size:21px;">Seconds</div>
<div class="lbl" style="top:899.7px"><span class="req">*</span><span style="letter-spacing:0.141px">Alarm Severity</span><span class="help">?</span><span class="colon">:</span></div>
<div class="inp" style="left:1084px;top:888px;width:1021.5px;height:47.5px"></div>
<div class="t" style="left:1102px;top:899.7px;font-size:21px;">Emergency</div>
<svg style="left:2072px;top:904px" width="18" height="15" viewBox="0 0 18 15"><path d="M1.8 2.5 L9 12.8 L16.2 2.5" stroke="rgba(0,0,0,.3)" stroke-width="1.5" fill="none"/></svg>
<div class="lbl" style="top:982.7px"><span class="req">*</span><span style="letter-spacing:0.262px">Trigger Times</span><span class="help">?</span><span class="colon">:</span></div>
<div class="inp" style="left:1084px;top:972.5px;width:135px;height:47px"></div>
<div class="t" style="left:1102.5px;top:982.7px;font-size:21px;">1</div>
<div class="lbl" style="top:1067.2px"><span class="req">*</span><span style="letter-spacing:0.259px">Alarm Content</span><span class="help">?</span><span class="colon">:</span></div>
<div class="inp" style="left:1084px;top:1055.5px;width:1021.5px;height:113.5px;border-color:#5c6bc0;box-shadow:0 0 0 3px rgba(63,81,181,.12)"></div>
<div class="t" style="left:1102px;top:1067.2px;font-size:21px;letter-spacing:.4px">taos<span class="u">_</span>dnodes<span class="u">_</span>info<span class="u">_</span>cpu<span class="u">_</span>system test alarm</div>
<div class="abs" style="left:1101px;top:1089px;width:302px;height:3px;background:repeating-linear-gradient(90deg,#ee6b5f 0 3px,transparent 3px 6px)"></div>
<svg style="left:2089px;top:1153px" width="12" height="12" viewBox="0 0 12 12"><g stroke="#555" stroke-width="1.3"><path d="M1 11 L11 1 M6 11 L11 6"/></g></svg>
<div class="t" style="right:910px;top:1173.7px;color:rgba(0,0,0,.45);letter-spacing:1px">38/200</div>
<div class="lbl" style="top:1250.1px"><span style="letter-spacing:0.086px">Bind Labels</span><span class="help">?</span><span class="colon">:</span></div>
<div class="inp" style="left:1084px;top:1247.5px;width:478.5px;height:46px"></div>
<div class="t" style="left:1102px;top:1258.3px;font-size:21px;">severity</div>
<svg style="left:1526.7px;top:1261px" width="18" height="18" viewBox="0 0 18 18"><circle cx="9" cy="9" r="9" fill="rgba(0,0,0,.25)"/><path d="M6 6 L12 12 M12 6 L6 12" stroke="#fff" stroke-width="1.6"/></svg>
<div class="t" style="left:1570.5px;top:1258.3px;font-size:21px;">:</div>
<div class="inp" style="left:1584.5px;top:1247.5px;width:478px;height:46px"></div>
<div class="t" style="left:1602px;top:1258.3px;font-size:21px;">emergency</div>
<svg style="left:2026.7px;top:1261px" width="18" height="18" viewBox="0 0 18 18"><circle cx="9" cy="9" r="9" fill="rgba(0,0,0,.25)"/><path d="M6 6 L12 12 M12 6 L6 12" stroke="#fff" stroke-width="1.6"/></svg>
<div class="btnd" style="left:2070.5px;top:1252.5px;width:35px;height:35px;border-radius:6px"></div><svg style="left:2078.0px;top:1260.0px" width="20" height="20" viewBox="0 0 20 20"><path d="M10 2 V18 M2 10 H18" stroke="#262626" stroke-width="2"/></svg>
<div class="lbl" style="top:1341.7px"><span style="letter-spacing:0.398px">Bind Annotation</span><span class="help">?</span><span class="colon">:</span></div>
<div class="inp" style="left:1084px;top:1339.5px;width:478.5px;height:46px"></div>
<div class="t" style="left:1102px;top:1349.7px;font-size:21px;color:rgba(0,0,0,.25)">Key</div>
<div class="t" style="left:1570.5px;top:1349.7px;font-size:21px;">:</div>
<div class="inp" style="left:1584.5px;top:1339.5px;width:478px;height:46px"></div>
<div class="t" style="left:1602px;top:1349.7px;font-size:21px;color:rgba(0,0,0,.25)">Value</div>
<div class="btnd" style="left:2070.5px;top:1344.5px;width:35px;height:35px;border-radius:6px"></div><svg style="left:2078.0px;top:1352.0px" width="20" height="20" viewBox="0 0 20 20"><path d="M10 2 V18 M2 10 H18" stroke="#262626" stroke-width="2"/></svg>
<div class="lbl" style="top:1433.4px"><span class="req">*</span><span style="letter-spacing:0.16px">Enable Threshold</span><span class="help">?</span><span class="colon">:</span></div>
<div class="abs" style="left:1084px;top:1430px;width:65.5px;height:33px;border-radius:17px;background:#4451b0"></div>
<div class="abs" style="left:1119px;top:1433px;width:27px;height:27px;border-radius:50%;background:#fff;box-shadow:0 2px 4px rgba(0,35,11,.2)"></div>
<div class="abs" style="left:452px;top:1541.5px;width:2116px;height:1.5px;background:#f0f0f0"></div>
<div class="btnd" style="left:1409.5px;top:1558px;width:112px;height:47.5px"></div>
<div class="t" style="left:1433px;top:1569.7px;font-size:21px;">Cancel</div>
<div class="btnp" style="left:1534px;top:1558px;width:77px;height:47.5px"></div>
<div class="t" style="left:1558.5px;top:1569.7px;font-size:21px;color:#fff">OK</div>
</div>
<div class="abs" style="left:0;top:0;width:3016px;height:2px;background:#777"></div>
<div class="abs" style="left:0;top:0;width:3016px;height:1717px;border-radius:0 0 10px 15px;border-bottom:2.5px solid #a3a3a3;box-shadow:0 0 0 40px #000"></div>
</body></html>
